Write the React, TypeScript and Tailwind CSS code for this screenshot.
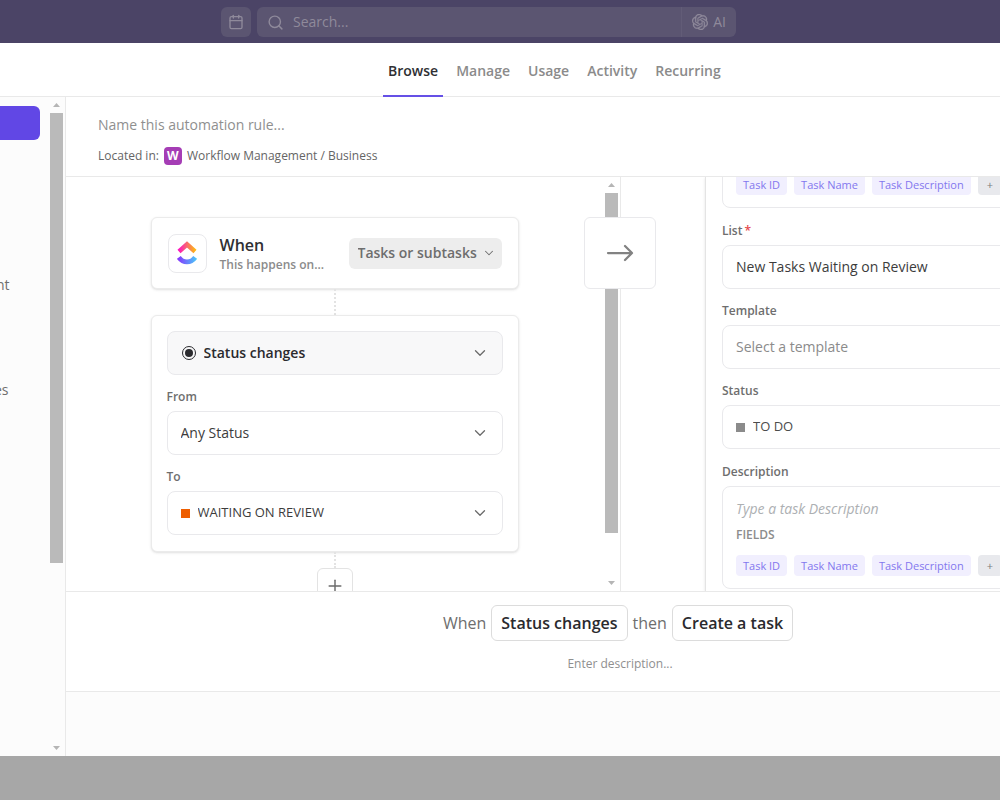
import type { ReactNode } from 'react'
import { Calendar, ChevronDown, Plus, Search } from 'lucide-react'
import { SiOpenai } from 'react-icons/si'

const tabs = ['Browse', 'Manage', 'Usage', 'Activity', 'Recurring']
const fieldTags = ['Task ID', 'Task Name', 'Task Description']

function ClickUpLogo() {
  return (
    <svg width="20" height="24" viewBox="0 0 20 24" fill="none" aria-hidden="true">
      <defs>
        <linearGradient id="logo-top" x1="0" y1="0" x2="20" y2="0" gradientUnits="userSpaceOnUse">
          <stop stopColor="#ff02d0" />
          <stop offset="0.5" stopColor="#f76b6f" />
          <stop offset="1" stopColor="#ffc800" />
        </linearGradient>
        <linearGradient id="logo-bottom" x1="0" y1="0" x2="20" y2="0" gradientUnits="userSpaceOnUse">
          <stop stopColor="#8930fd" />
          <stop offset="1" stopColor="#49ccf9" />
        </linearGradient>
      </defs>
      <path d="M2 10.4 10 3.4l8 7" stroke="url(#logo-top)" strokeWidth="4.6" />
      <path d="M1.8 16.4c4.4 6 12 6 16.4 0" stroke="url(#logo-bottom)" strokeWidth="4.8" />
    </svg>
  )
}

function LongArrow() {
  return (
    <svg
      width="28"
      height="18"
      viewBox="0 0 28 18"
      fill="none"
      stroke="currentColor"
      strokeWidth="2.25"
      strokeLinecap="round"
      strokeLinejoin="round"
      aria-hidden="true"
    >
      <path d="M2 9h24M19 2l7 7-7 7" />
    </svg>
  )
}

interface ScrollbarProps {
  thumbClass: string
}

function Scrollbar({ thumbClass }: ScrollbarProps) {
  return (
    <div className="w-[13px] shrink-0 flex flex-col items-center py-[6px]" aria-hidden="true">
      <svg width="7" height="4" viewBox="0 0 7 4" className="shrink-0">
        <path d="M0 4 3.5 0 7 4z" fill="#b5b5b5" />
      </svg>
      <div className={`w-full mt-[6px] bg-[#bababa] ${thumbClass}`} />
      <svg width="7" height="4" viewBox="0 0 7 4" className="shrink-0 mt-auto">
        <path d="M0 0h7L3.5 4z" fill="#b5b5b5" />
      </svg>
    </div>
  )
}

interface SelectFieldProps {
  id: string
  value: string
  icon?: ReactNode
  boxClass?: string
  textClass?: string
  label?: string
}

function SelectField({
  id,
  value,
  icon,
  boxClass = 'bg-white',
  textClass = 'text-sm text-[#3c3c3c]',
  label
}: SelectFieldProps) {
  return (
    <div className={`h-11 flex items-center gap-2 px-[13px] border border-[#e9e9ec] rounded-lg ${boxClass}`}>
      {icon}
      <select
        id={id}
        aria-label={label}
        className={`flex-1 min-w-0 appearance-none bg-transparent outline-none ${textClass}`}
      >
        <option>{value}</option>
      </select>
      <ChevronDown size={18} strokeWidth={1.75} className="shrink-0 text-[#6b6b6b]" />
    </div>
  )
}

interface FieldLabelProps {
  htmlFor: string
  required?: boolean
  children: ReactNode
}

function FieldLabel({ htmlFor, required, children }: FieldLabelProps) {
  return (
    <label htmlFor={htmlFor} className="block pt-3 pb-1 text-xs leading-5 font-semibold text-[#6e6e6e]">
      {children}
      {required && <span className="text-[#e5484d] ml-[2px]">*</span>}
    </label>
  )
}

function FieldTags() {
  return (
    <div className="flex gap-[7px]">
      {fieldTags.map((tag) => (
        <button
          key={tag}
          className="h-[21px] px-[7px] rounded bg-[#f1effe] text-[11px] leading-4 text-[#8377ee] whitespace-nowrap"
        >
          {tag}
        </button>
      ))}
      <button className="h-[21px] px-[9px] rounded bg-[#e8e9ed] text-[11px] leading-4 text-[#7c7c7c]" aria-label="More fields">
        +
      </button>
    </div>
  )
}

function TopBar() {
  return (
    <header className="h-[43px] shrink-0 flex items-center gap-[6px] pl-[221px] pt-px bg-[#4b4466] text-[#8f8a9b]">
      <button className="w-[30px] h-[30px] rounded-md bg-[#5b5571] flex items-center justify-center" aria-label="Calendar">
        <Calendar size={16} strokeWidth={2} />
      </button>
      <div className="w-[479px] h-[30px] rounded-md bg-[#5b5571] flex items-center pl-[10px]">
        <Search size={17} strokeWidth={2} className="shrink-0" />
        <input
          type="text"
          aria-label="Search"
          placeholder="Search..."
          className="flex-1 min-w-0 ml-[9px] bg-transparent outline-none text-sm placeholder:text-[#8f8a9b]"
        />
        <button className="h-full px-[10px] border-l border-[#625c77] flex items-center gap-[5px] text-sm">
          <SiOpenai size={16} stroke="currentColor" strokeWidth={0.5} />
          AI
        </button>
      </div>
    </header>
  )
}

function Tabs() {
  return (
    <nav className="h-[54px] shrink-0 flex gap-2 pl-[383px] border-b border-[#e9e9e9] bg-white">
      {tabs.map((tab) => (
        <button
          key={tab}
          className={
            tab === 'Browse'
              ? 'px-[5px] pt-[3px] h-[54px] text-sm font-semibold text-[#2f2f33] border-b-2 border-[#6550e6]'
              : 'px-[5px] pt-[3px] h-[54px] text-sm font-semibold text-[#8b8b8b] border-b-2 border-transparent'
          }
        >
          {tab}
        </button>
      ))}
    </nav>
  )
}

function Sidebar() {
  return (
    <aside className="w-[66px] shrink-0 flex border-r border-[#e9e9e9] bg-[#fcfcfc] overflow-hidden">
      <div className="w-10 shrink-0 flex flex-col pt-[9px] text-sm leading-5 text-[#6e6e6e]">
        <button className="h-[34px] rounded-r-md bg-[#6147e5]" aria-label="Add automation" />
        <a href="#" className="mt-[135px] -ml-[4px]">nt</a>
        <a href="#" className="mt-[85px] -ml-[6px]">es</a>
      </div>
      <div className="flex ml-[10px]">
        <Scrollbar thumbClass="h-[450px]" />
      </div>
    </aside>
  )
}

function RuleHeader() {
  return (
    <div className="h-20 shrink-0 px-8 pt-[18px] border-b border-[#e9e9e9]">
      <input
        type="text"
        aria-label="Automation name"
        placeholder="Name this automation rule..."
        className="block w-full h-5 outline-none text-sm placeholder:text-[#8f8f8f]"
      />
      <div className="flex items-center mt-[11px] text-xs leading-5 text-[#656565]">
        Located in:
        <span className="w-[18px] h-[18px] mx-[5px] rounded bg-[#a53db5] flex items-center justify-center text-xs font-bold text-white">
          W
        </span>
        Workflow Management / Business
      </div>
    </div>
  )
}

function TriggerColumn() {
  return (
    <section className="w-[555px] shrink-0 flex">
      <div className="flex-1 flex flex-col items-center pt-10 pr-[2px] overflow-hidden">
        <div className="w-[368px] h-[72px] shrink-0 flex items-center px-4 bg-white border border-[#ebebeb] rounded-md shadow-sm">
          <div className="w-[39px] h-[39px] shrink-0 border border-[#e9e9ec] rounded-lg flex items-center justify-center">
            <ClickUpLogo />
          </div>
          <div className="ml-[13px] pt-[3px]">
            <div className="text-base leading-5 font-semibold text-[#2f2f33]">When</div>
            <div className="text-xs leading-5 font-semibold text-[#8b8b8b]">This happens on...</div>
          </div>
          <div className="h-[31px] ml-auto flex items-center gap-1 pl-[9px] pr-[6px] rounded-md bg-[#ededed] text-[#6e6e6e]">
            <select aria-label="Applies to" className="appearance-none bg-transparent outline-none text-sm font-semibold">
              <option>Tasks or subtasks</option>
            </select>
            <ChevronDown size={14} strokeWidth={1.75} />
          </div>
        </div>
        <div className="h-[26px] shrink-0 border-l-2 border-dotted border-[#e3e3e3]" />
        <div className="w-[368px] shrink-0 p-[15px] pb-4 bg-white border border-[#ebebeb] rounded-md shadow-sm">
          <SelectField
            id="trigger"
            label="Trigger"
            value="Status changes"
            boxClass="bg-[#f8f8f9]"
            textClass="text-sm font-semibold text-[#2a2a2e]"
            icon={
              <span className="w-[14px] h-[14px] ml-px shrink-0 rounded-full border border-[#2a2a2e] p-[2px]">
                <span className="block w-full h-full rounded-full bg-[#2a2a2e]" />
              </span>
            }
          />
          <FieldLabel htmlFor="from-status">From</FieldLabel>
          <SelectField id="from-status" value="Any Status" />
          <FieldLabel htmlFor="to-status">To</FieldLabel>
          <SelectField
            id="to-status"
            value="WAITING ON REVIEW"
            textClass="text-[13px] text-[#3c3c3c]"
            icon={<span className="w-[9px] h-[9px] shrink-0 bg-[#ee5e00]" />}
          />
        </div>
        <div className="h-4 shrink-0 border-l-2 border-dotted border-[#e3e3e3]" />
        <button
          className="w-9 h-9 shrink-0 border border-[#e3e3e3] rounded-md flex items-center justify-center text-[#6b6b6b]"
          aria-label="Add condition"
        >
          <Plus size={20} strokeWidth={1.75} />
        </button>
      </div>
      <div className="relative flex pr-[2px] border-r border-[#e9e9e9]">
        <Scrollbar thumbClass="h-[340px]" />
        <div className="absolute top-10 -left-[21px] w-[72px] h-[72px] bg-white border border-[#e9e9ec] rounded-md flex items-center justify-center text-[#828282]">
          <LongArrow />
        </div>
      </div>
    </section>
  )
}

function ActionColumn() {
  return (
    <section className="flex-1 min-w-0 ml-[84px] flex flex-col justify-end pl-4 pb-[2px] overflow-hidden border-l border-[#e4e4e4] shadow-sm">
      <div className="w-[360px] shrink-0">
        <div className="border border-[#e9e9ec] rounded-lg px-[13px] pt-10 pb-3">
          <FieldTags />
        </div>
        <div className="pt-px">
          <FieldLabel htmlFor="list" required>
            List
          </FieldLabel>
        </div>
        <SelectField id="list" value="New Tasks Waiting on Review" />
        <FieldLabel htmlFor="template">Template</FieldLabel>
        <SelectField id="template" value="Select a template" textClass="text-sm text-[#8b8b8b]" />
        <FieldLabel htmlFor="status">Status</FieldLabel>
        <SelectField
          id="status"
          value="TO DO"
          textClass="text-[13px] text-[#4c4c4c]"
          icon={<span className="w-[9px] h-[9px] shrink-0 bg-[#8b8b8b]" />}
        />
        <div className="pt-px">
          <FieldLabel htmlFor="description">Description</FieldLabel>
        </div>
        <div className="border border-[#e9e9ec] rounded-lg px-[13px] py-3">
          <textarea
            id="description"
            rows={1}
            placeholder="Type a task Description"
            className="block w-full h-5 resize-none overflow-hidden outline-none text-sm leading-5 italic placeholder:text-[#adb0b3]"
          />
          <div className="mt-2 mb-3 text-xs leading-4 font-semibold text-[#8c8c8c]">FIELDS</div>
          <FieldTags />
        </div>
      </div>
    </section>
  )
}

function RuleSummary() {
  return (
    <div className="h-[101px] shrink-0 border-y border-[#e9e9e9] pl-[170px] pt-[13px] flex flex-col items-center">
      <div className="flex items-center gap-[5px] text-base text-[#6e6e6e]">
        When
        <button className="h-9 px-[9px] border border-[#dcdcdc] rounded-md font-semibold text-[#2a2a2e]">Status changes</button>
        then
        <button className="h-9 px-[9px] border border-[#dcdcdc] rounded-md font-semibold text-[#2a2a2e]">Create a task</button>
      </div>
      <input
        type="text"
        aria-label="Description of the rule"
        placeholder="Enter description..."
        className="w-60 ml-1 mt-3 h-5 text-center outline-none text-xs placeholder:text-[#8f8f8f]"
      />
    </div>
  )
}

export default function App() {
  return (
    <div className="h-screen flex flex-col overflow-hidden bg-white font-['Open_Sans','Noto_Sans',sans-serif]">
      <TopBar />
      <Tabs />
      <div className="flex-1 min-h-0 flex">
        <Sidebar />
        <main className="flex-1 min-w-0 flex flex-col">
          <RuleHeader />
          <div className="flex-1 min-h-0 flex overflow-hidden">
            <TriggerColumn />
            <ActionColumn />
          </div>
          <RuleSummary />
          <div className="h-16 shrink-0 bg-[#fcfcfc]" />
        </main>
      </div>
      <div className="h-11 shrink-0 bg-[#a7a7a7]" />
    </div>
  )
}
